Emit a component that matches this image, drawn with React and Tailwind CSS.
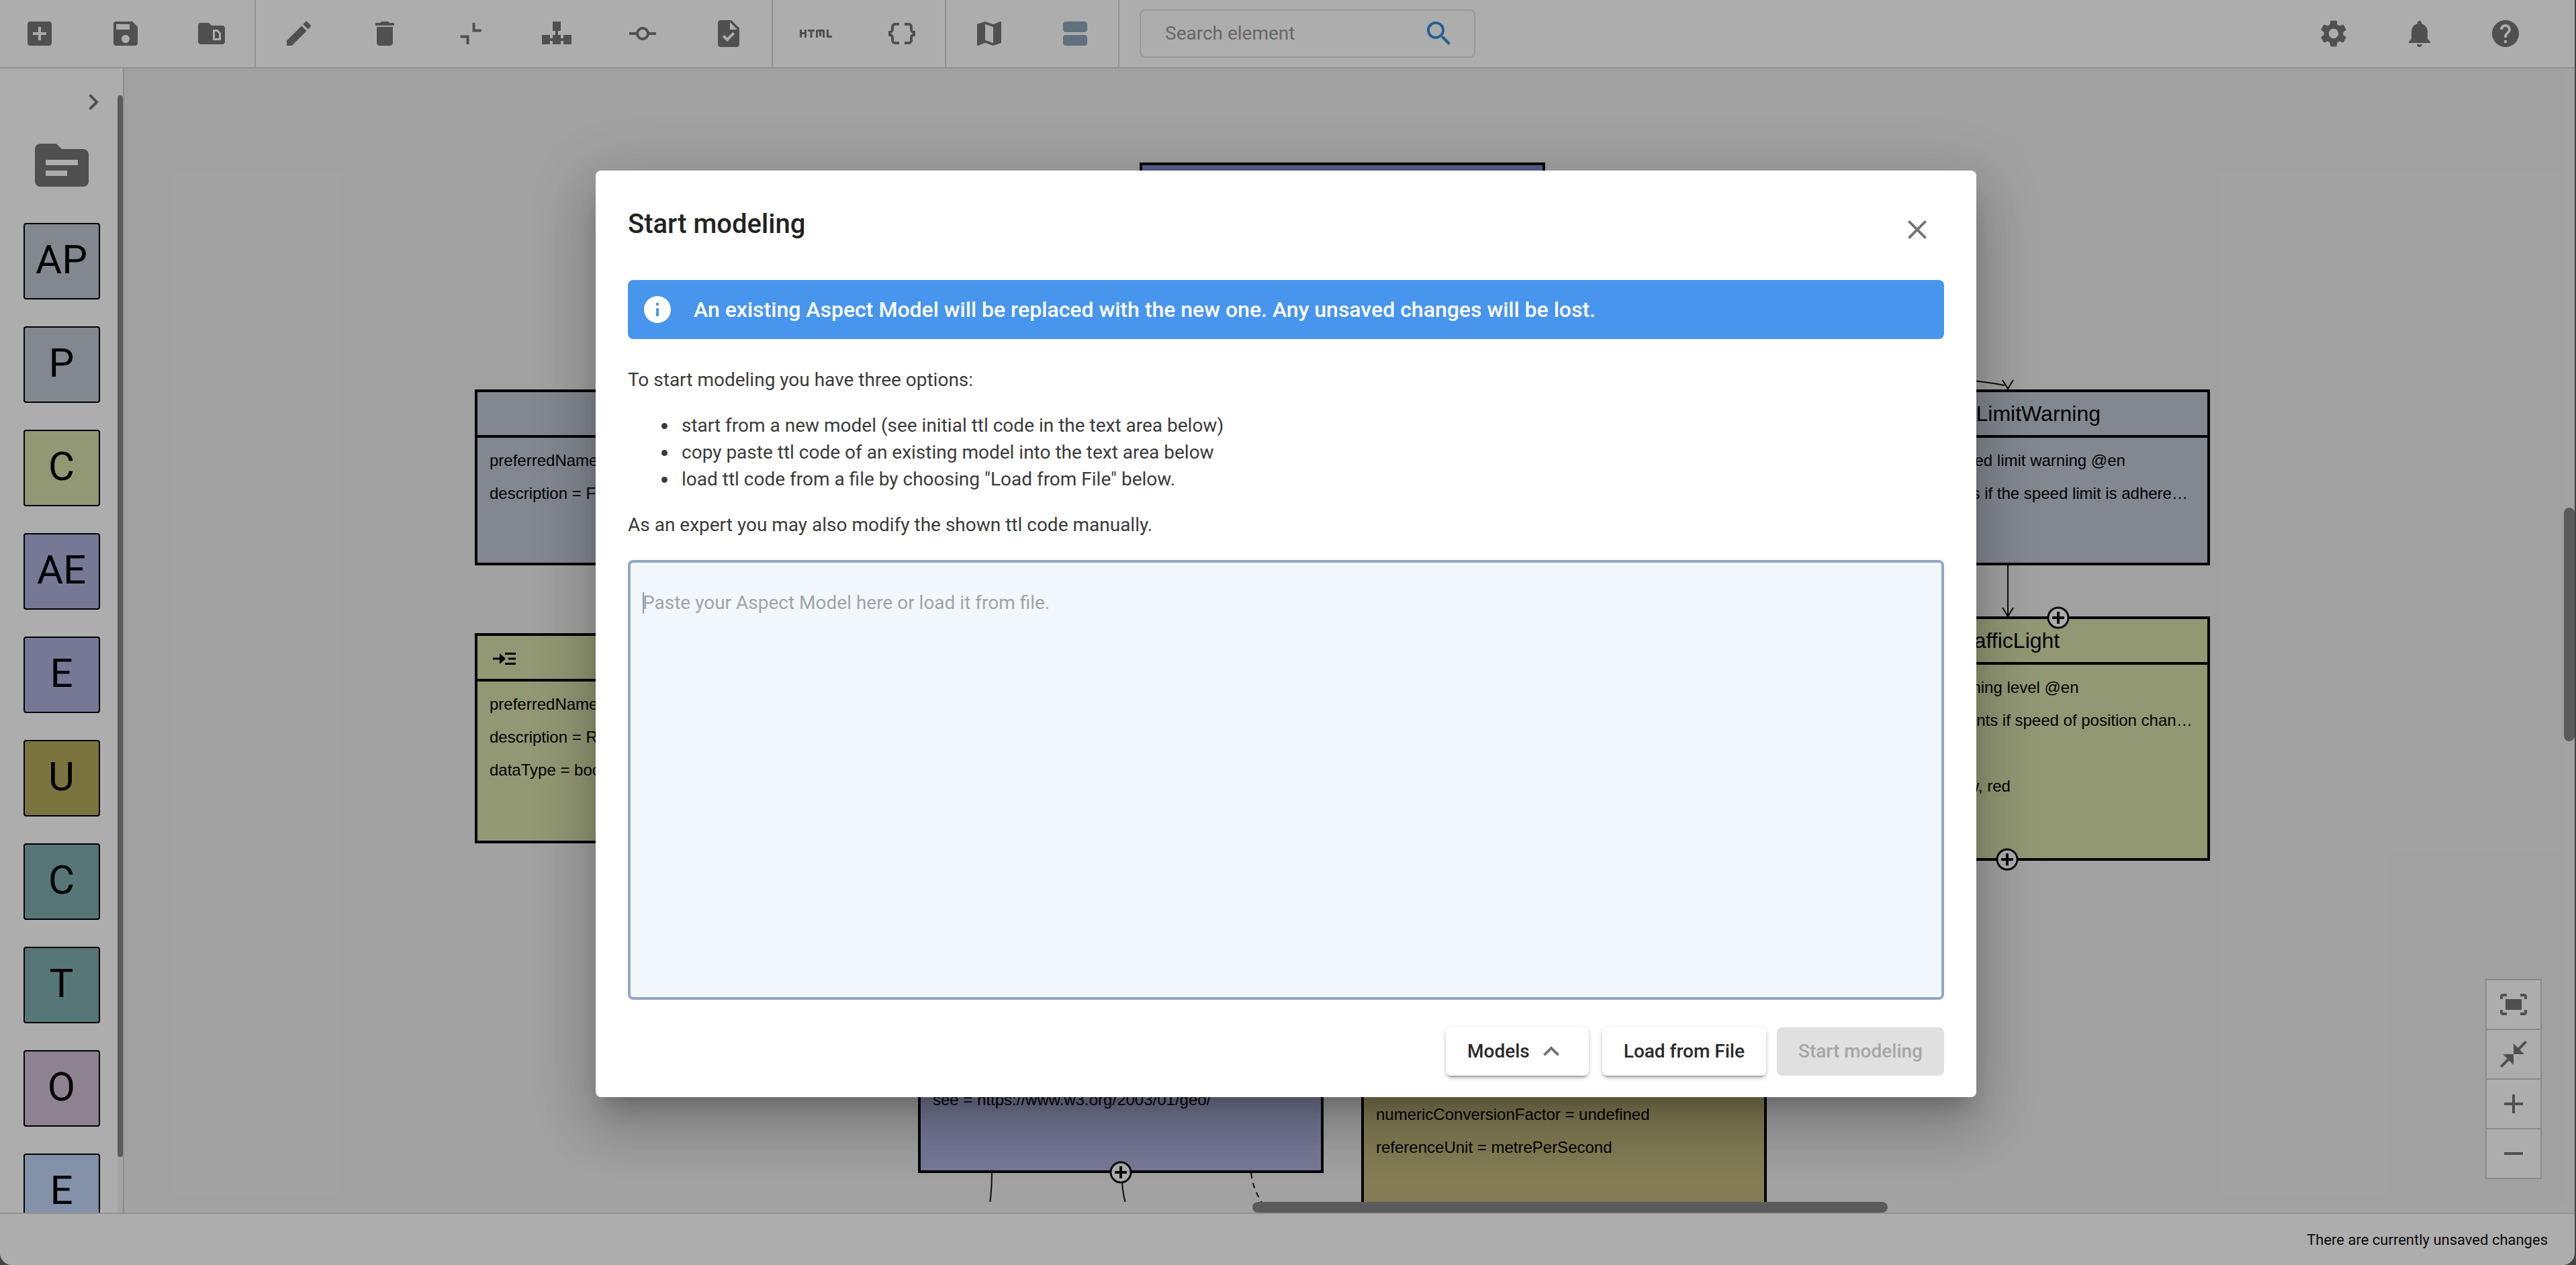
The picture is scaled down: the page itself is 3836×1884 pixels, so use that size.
import React from "react";
import {
  MdAddBox,
  MdSave,
  MdSnippetFolder,
  MdEdit,
  MdDelete,
  MdCommit,
  MdTask,
  MdHtml,
  MdDataObject,
  MdMap,
  MdViewAgenda,
  MdSearch,
  MdSettings,
  MdNotifications,
  MdHelp,
  MdChevronRight,
  MdTopic,
  MdClose,
  MdInfo,
  MdExpandLess,
  MdFitScreen,
  MdCloseFullscreen,
  MdAdd,
  MdRemove,
} from "react-icons/md";

function CollapseIcon({ className }) {
  return (
    <svg viewBox="0 0 24 24" className={className} fill="none" stroke="currentColor" strokeWidth="2" aria-hidden="true">
      <path d="M14.3 4v5.7h5.5M4.2 14.3h5.6V20" />
    </svg>
  );
}

function HierarchyIcon({ className }) {
  return (
    <svg viewBox="0 0 24 24" className={className} fill="currentColor" aria-hidden="true">
      <path d="M9 3h6v7h-2v3h2v2.5h2V13h6v7h-6v-2.5h-2V20H9v-2.5H7V20H1v-7h6v2.5h2V13h2v-3H9z" />
    </svg>
  );
}

const toolbarGroups = [
  {
    className: "pl-[35px] pr-10",
    items: [
      ["New", MdAddBox],
      ["Save", MdSave],
      ["Open folder", MdSnippetFolder],
    ],
  },
  {
    className: "px-10",
    items: [
      ["Edit", MdEdit],
      ["Delete", MdDelete],
      ["Collapse", CollapseIcon],
      ["Format", HierarchyIcon],
      ["Connect", MdCommit],
      ["Validate", MdTask],
    ],
  },
  {
    className: "px-10",
    items: [
      ["HTML documentation", MdHtml],
      ["JSON payload", MdDataObject],
    ],
  },
  {
    className: "px-10",
    items: [
      ["Toggle map", MdMap],
      ["Toggle toolbar", MdViewAgenda, "text-[#8fa5bc]"],
    ],
  },
];

const palette = [
  ["AP", "bg-[#c2c8d4]"],
  ["P", "bg-[#c2c8d4]"],
  ["C", "bg-[#d8e1ac]"],
  ["AE", "bg-[#afb2de]"],
  ["E", "bg-[#afb2de]"],
  ["U", "bg-[#b6ab5e]"],
  ["C", "bg-[#81aeb0]"],
  ["T", "bg-[#81aeb0]"],
  ["O", "bg-[#d2bed7]"],
  ["E", "bg-[#c1d8f9]"],
];

const nodes = [
  { pos: "left-[1512px] top-[140px] h-[262px]", color: "bg-[#7e8ccf]", rows: [] },
  {
    pos: "left-[522px] top-[478px] h-[262px]",
    color: "bg-[#c2c8d4]",
    rows: ["preferredName =", "description = Flag"],
  },
  {
    pos: "left-[522px] top-[841px] h-[313px]",
    color: "bg-[#d8e1ac]",
    inherited: true,
    rows: ["preferredName =", "description = Rule", "dataType = boolean"],
  },
  {
    pos: "left-[2502px] top-[478px] h-[262px]",
    color: "bg-[#c2c8d4]",
    title: "SpeedLimitWarning",
    rows: [
      "preferredName = Speed limit warning @en",
      "description = Indicates if the speed limit is adhere…",
    ],
  },
  {
    pos: "left-[2502px] top-[816px] h-[364px]",
    color: "bg-[#d8e1ac]",
    title: "TrafficLight",
    rows: [
      "preferredName = warning level @en",
      "description = Represents if speed of position chan…",
      "dataType = string",
      "values = green, yellow, red",
    ],
  },
  {
    pos: "left-[1182px] top-[1430px] h-[215px]",
    color: "bg-[#afb2de]",
    rows: ["see = https://www.w3.org/2003/01/geo/"],
  },
  {
    pos: "left-[1842px] top-[1452px] h-[300px]",
    color: "bg-[#c2b77c]",
    rows: ["numericConversionFactor = undefined", "referenceUnit = metrePerSecond"],
  },
];

function Node({ pos, color, title, inherited, rows }) {
  return (
    <article className={`absolute ${pos} ${color} w-[604px] border-4 border-black text-black`}>
      <header className="relative flex h-[68px] items-center justify-center border-b-4 border-black text-[32px] leading-[40px]">
        {inherited && (
          <svg viewBox="0 0 34 20" className="absolute left-[23px] top-6 h-5 w-[34px]" aria-hidden="true">
            <path d="M0 10h12M18 2.5h16M23 10h11M18 17.5h16" stroke="#000" strokeWidth="3" />
            <path d="M10 2l9 8-9 8z" />
          </svg>
        )}
        {title}
      </header>
      <div className="pl-[18px] pt-[9px] text-[24px] leading-[49px] whitespace-nowrap">
        {rows.map((row) => (
          <p key={row}>{row}</p>
        ))}
      </div>
    </article>
  );
}

function Canvas() {
  return (
    <div className="absolute inset-0 bottom-4 overflow-hidden font-['Liberation_Sans',Arial,sans-serif]">
      {nodes.map((node) => (
        <Node key={node.pos} {...node} />
      ))}
      <svg className="absolute inset-0 h-full w-full" fill="none" stroke="#111" strokeWidth="2" aria-hidden="true">
        <path d="M2700 461Q2760 464 2800 472M2797 464l8 13 8-13" />
        <path d="M2805 740v75M2797 803l8 13 8-13" />
        <path d="M1292 1645q0 25-3 45M1486 1660q1 14 5 30" />
        <path d="M1678 1645q3 25 17 45" strokeDasharray="8 7" />
        {[
          [2880, 818],
          [2804, 1178],
          [1484, 1644],
        ].map(([x, y]) => (
          <g key={x} strokeWidth="3">
            <circle cx={x} cy={y} r="15" fill="#fff" />
            <path d={`M${x - 9} ${y}h18M${x} ${y - 9}v18`} strokeWidth="4" />
          </g>
        ))}
      </svg>
    </div>
  );
}

const zoomControls = [
  ["Fit to screen", MdFitScreen],
  ["Actual size", MdCloseFullscreen],
  ["Zoom in", MdAdd],
  ["Zoom out", MdRemove],
];

function StartDialog() {
  return (
    <section
      role="dialog"
      aria-labelledby="dialog-title"
      className="flex w-[2056px] max-w-full flex-col rounded-lg bg-white px-12 pb-8 pt-14 text-[28px] leading-[40px] text-[#3a3a3a] shadow-[0_22px_30px_-14px_rgba(0,0,0,0.2),0_48px_76px_6px_rgba(0,0,0,0.14),0_18px_92px_16px_rgba(0,0,0,0.12)]"
    >
      <header className="flex items-start justify-between pr-4">
        <h1 id="dialog-title" className="text-[40px] font-medium leading-[48px] text-[#222]">
          Start modeling
        </h1>
        <button type="button" aria-label="Close" className="mt-2 text-[#757575]">
          <MdClose className="size-12" />
        </button>
      </header>

      <div role="alert" className="mt-[51px] flex h-[88px] items-center gap-[30px] rounded-lg bg-[#4795ec] px-5 text-[32px] font-medium text-white">
        <MdInfo className="size-12" />
        <p>An existing Aspect Model will be replaced with the new one. Any unsaved changes will be lost.</p>
      </div>

      <p className="mt-[41px]">To start modeling you have three options:</p>
      <ul className="mt-7 list-disc pl-[74px]">
        <li className="pl-1.5">start from a new model (see initial ttl code in the text area below)</li>
        <li className="pl-1.5">copy paste ttl code of an existing model into the text area below</li>
        <li className="pl-1.5">load ttl code from a file by choosing "Load from File" below.</li>
      </ul>
      <p className="mt-7">As an expert you may also modify the shown ttl code manually.</p>

      <div className="relative mt-8">
        <textarea
          aria-label="Aspect Model"
          placeholder="Paste your Aspect Model here or load it from file."
          className="block h-[655px] w-full resize-none rounded-lg border-4 border-[#92a7c3] bg-[#f2f7fe] px-[18px] pt-10 placeholder:text-[#a0a3a7] focus:outline-none"
        />
        <span className="absolute left-[22px] top-12 h-8 w-0.5 bg-[#7d99c8]" />
      </div>

      <footer className="mt-[41px] flex justify-end gap-4 font-medium text-[#2a2a2a]">
        <button
          type="button"
          className="mr-1 flex h-[72px] items-center gap-2 rounded-lg bg-white px-8 shadow-[0_6px_2px_-4px_rgba(0,0,0,0.2),0_4px_4px_rgba(0,0,0,0.14),0_2px_10px_rgba(0,0,0,0.12)]"
        >
          Models
          <MdExpandLess className="size-12 text-[#777]" />
        </button>
        <button
          type="button"
          className="h-[72px] rounded-lg bg-white px-8 shadow-[0_6px_2px_-4px_rgba(0,0,0,0.2),0_4px_4px_rgba(0,0,0,0.14),0_2px_10px_rgba(0,0,0,0.12)]"
        >
          Load from File
        </button>
        <button type="button" disabled className="h-[72px] rounded-lg bg-[#e0e0e0] px-8 text-[#a6a6a6]">
          Start modeling
        </button>
      </footer>
    </section>
  );
}

export default function App() {
  return (
    <div className="h-screen bg-[#444] pr-0.5 font-['Roboto',sans-serif]">
      <div className="relative flex h-full flex-col overflow-hidden rounded-b-[18px] bg-white text-[#777]">
        <header className="flex h-[102px] shrink-0 items-stretch border-b-2 border-[#d8d8d8]">
          {toolbarGroups.map((group) => (
            <div
              key={group.items[0][0]}
              className={`flex items-center gap-20 border-r-2 border-[#d8d8d8] ${group.className}`}
            >
              {group.items.map(([label, Icon, tone]) => (
                <button key={label} type="button" aria-label={label} className={tone}>
                  <Icon className="size-12" />
                </button>
              ))}
            </div>
          ))}
          <label className="ml-[30px] flex h-[72px] w-[500px] items-center self-center rounded-lg border-2 border-[#e0e0e0] pl-9 pr-7">
            <input
              type="search"
              placeholder="Search element"
              aria-label="Search element"
              className="min-w-0 flex-1 bg-transparent text-[28px] placeholder:text-[#999] focus:outline-none"
            />
            <MdSearch className="size-12 text-[#358cdb]" />
          </label>
          <div className="ml-auto flex items-center gap-20 pr-[79px]">
            <button type="button" aria-label="Settings">
              <MdSettings className="size-12" />
            </button>
            <button type="button" aria-label="Notifications">
              <MdNotifications className="size-12" />
            </button>
            <button type="button" aria-label="Help">
              <MdHelp className="size-12" />
            </button>
          </div>
        </header>

        <div className="flex min-h-0 flex-1">
          <aside className="relative flex w-[185px] shrink-0 flex-col items-center overflow-hidden border-r-2 border-[#d0d0d0] pt-[26px]">
            <button type="button" aria-label="Expand sidebar" className="mr-5 self-end">
              <MdChevronRight className="size-12" />
            </button>
            <button type="button" aria-label="Workspace" className="mt-[22px]">
              <MdTopic className="size-24" />
            </button>
            <div className="mt-[38px] flex flex-col gap-10">
              {palette.map(([letter, color], i) => (
                <button
                  key={i}
                  type="button"
                  className={`size-[114px] shrink-0 rounded border-2 border-black pb-1 text-[60px] leading-none text-black ${color}`}
                >
                  {letter}
                </button>
              ))}
            </div>
            <div className="absolute bottom-0 right-0 top-10 w-2 bg-[#f2f2f2]">
              <div className="h-[95%] rounded bg-[#878787]" />
            </div>
          </aside>

          <main className="relative min-w-0 flex-1 bg-[#eee]">
            <Canvas />
            <div className="absolute bottom-[50px] right-[49px] flex w-[84px] flex-col gap-0.5 border-2 border-[#cbcbcb] bg-[#cbcbcb]">
              {zoomControls.map(([label, Icon]) => (
                <button
                  key={label}
                  type="button"
                  aria-label={label}
                  className="flex h-[72px] items-center justify-center bg-white"
                >
                  <Icon className="size-12" />
                </button>
              ))}
            </div>
            <div className="absolute inset-x-0 bottom-0 h-4 bg-[#f1f1f1]">
              <div className="ml-[1680px] h-full w-[946px] rounded-lg bg-[#878787]" />
            </div>
            <div className="absolute bottom-4 right-0 top-0 w-4 bg-[#f1f1f1] pt-[654px]">
              <div className="h-[348px] rounded-lg bg-[#878787]" />
            </div>
          </main>
        </div>

        <footer className="flex h-[78px] shrink-0 items-center justify-end border-t-2 border-[#d8d8d8] pr-10 text-[22px] text-[#111]">
          There are currently unsaved changes
        </footer>

        <div className="absolute inset-0 flex items-center justify-center bg-black/32 pr-1 pt-1">
          <StartDialog />
        </div>
      </div>
    </div>
  );
}
